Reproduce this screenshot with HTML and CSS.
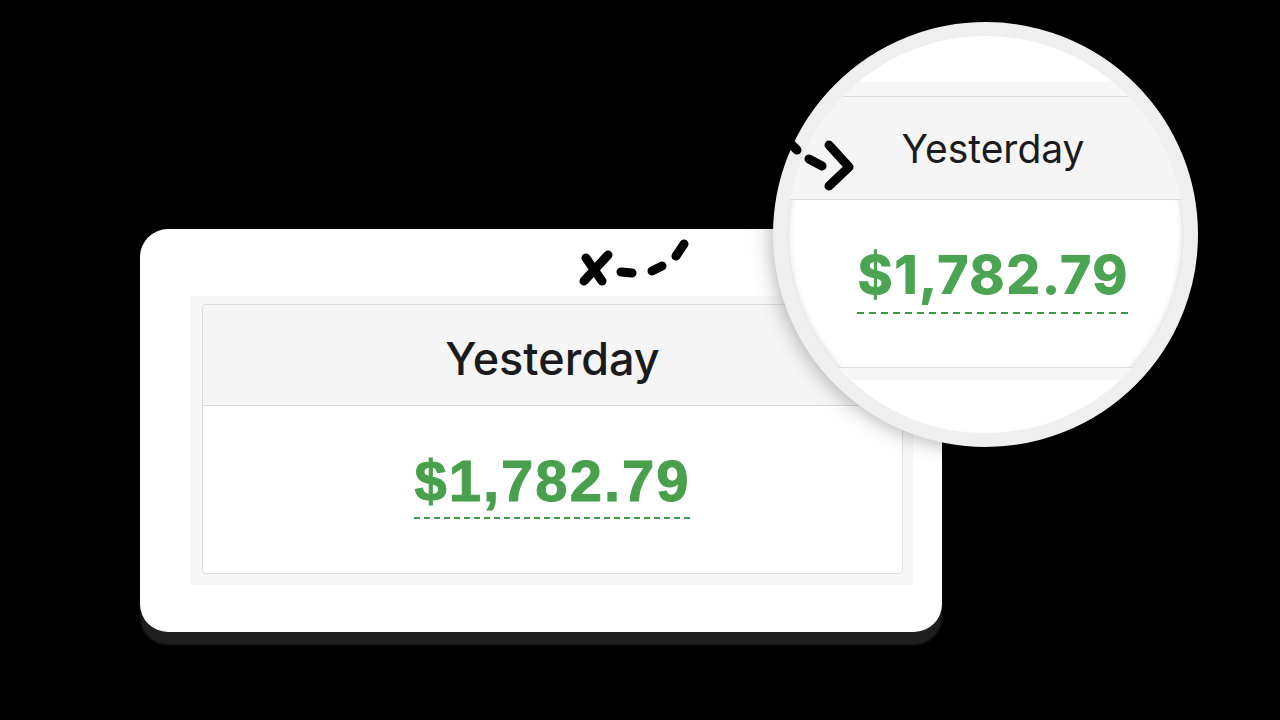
FILE: index.html
```html
<!DOCTYPE html>
<html lang="en">
<head>
    <meta charset="UTF-8">
    <meta name="viewport" content="width=device-width, initial-scale=1.0">
    <title>Yesterday</title>
    <link rel="stylesheet" href="styles.css">
</head>
<body>
    <div class="stage">
        <div class="card">
            <div class="panel">
                <div class="stat">
                    <div class="stat-head">Yesterday</div>
                    <div class="stat-body">
                        <span class="amount">$1,782.79</span>
                    </div>
                </div>
            </div>
        </div>

        <!-- magnifier -->
        <div class="lens">
            <div class="lens-view">
                <div class="lens-top"></div>
                <div class="lens-head">Yesterday</div>
                <div class="lens-body">
                    <span class="amount amount-lg">$1,782.79</span>
                </div>
                <div class="lens-foot"></div>
            </div>
        </div>

        <svg class="scribbles" width="1280" height="720" viewBox="0 0 1280 720">
            <g fill="none" stroke="#000" stroke-width="9" stroke-linecap="round" stroke-linejoin="round">
                <path d="M586 258 L602 281"/>
                <path d="M608 255 L584 281"/>
                <path d="M621 272 L632 273"/>
                <path d="M652 271 L662 266"/>
                <path d="M676 256 L684 244"/>
                <path d="M790 143 L797 150"/>
                <path d="M809 159 L822 166"/>
                <path d="M829 145 L849 167 L829 186"/>
            </g>
        </svg>
    </div>
</body>
</html>
```

FILE: styles.css
```css
body {
    margin: 0;
    padding: 0;
    background: #000;
    font-family: "Liberation Sans", Arial, sans-serif;
}
.stage {
    position: relative;
    width: 1280px;
    height: 720px;
    overflow: hidden;
    padding: 229px 0 0 140px;
    box-sizing: border-box;
}
.card {
    width: 802px;
    height: 403px;
    box-sizing: border-box;
    padding: 67px 29px 47px 50px;
    background: #fff;
    border-radius: 28px;
    box-shadow: 0 13px 2px #1f1f1f;
}
.panel {
    height: 289px;
    box-sizing: border-box;
    padding: 8px 10px 11px 12px;
    background: #f7f7f7;
}
.stat {
    height: 100%;
    display: flex;
    flex-direction: column;
    background: #fff;
    border: 1px solid #dcdcdc;
    border-radius: 4px;
    box-sizing: border-box;
    overflow: hidden;
}
.stat-head {
    height: 101px;
    flex: none;
    display: flex;
    align-items: center;
    justify-content: center;
    padding-top: 6px;
    box-sizing: border-box;
    background: #f5f5f5;
    border-bottom: 1px solid #dcdcdc;
    color: #1b1b1d;
    font-family: Inter, "Liberation Sans", sans-serif;
    font-weight: 500;
    font-size: 45px;
}
.stat-body {
    flex: 1;
    display: flex;
    align-items: center;
    justify-content: center;
    padding-bottom: 8px;
}
.amount {
    display: inline-block;
    padding-bottom: 9px;
    color: #48a04d;
    font-weight: bold;
    font-size: 58px;
    line-height: 1;
    letter-spacing: 2px;
    -webkit-text-stroke: 1px #48a04d;
    background: repeating-linear-gradient(90deg, #3f9a45 0 6px, transparent 6px 10px) bottom left / 100% 2px no-repeat;
}

.lens {
    position: absolute;
    left: 773px;
    top: 22px;
    width: 425px;
    height: 425px;
    box-sizing: border-box;
    border: 14px solid #efefef;
    border-radius: 50%;
    background: #fff;
    box-shadow: 0 0 22px rgba(0, 0, 0, 0.35), inset 0 0 7px rgba(0, 0, 0, 0.22);
    overflow: hidden;
}
.lens-view {
    height: 100%;
    display: flex;
    flex-direction: column;
}
.lens-top {
    height: 60px;
    flex: none;
    background: linear-gradient(#fff 0 46px, #f7f7f7 46px);
    border-bottom: 1px solid #dcdcdc;
}
.lens-head {
    height: 102px;
    flex: none;
    padding-left: 15px;
    display: flex;
    align-items: center;
    justify-content: center;
    background: #f5f5f5;
    border-bottom: 1px solid #dcdcdc;
    color: #1b1b1d;
    font-family: Inter, "Liberation Sans", sans-serif;
    font-size: 39px;
}
.lens-body {
    height: 168px;
    flex: none;
    padding-left: 15px;
    display: flex;
    align-items: center;
    justify-content: center;
    padding-bottom: 6px;
    box-sizing: border-box;
    border-bottom: 1px solid #dcdcdc;
}
.amount-lg {
    font-family: Inter, "Liberation Sans", sans-serif;
    font-weight: 800;
    font-size: 54px;
    letter-spacing: 1px;
    -webkit-text-stroke: 0;
    color: #4aa452;
    padding-bottom: 12px;
    background: repeating-linear-gradient(90deg, #3f9a45 0 7px, transparent 7px 12px) bottom left / 100% 2px no-repeat;
}
.lens-foot {
    flex: 1;
    background: linear-gradient(#f7f7f7 0 12px, #fff 12px);
}
.scribbles {
    position: absolute;
    left: 0;
    top: 0;
    pointer-events: none;
}
```
